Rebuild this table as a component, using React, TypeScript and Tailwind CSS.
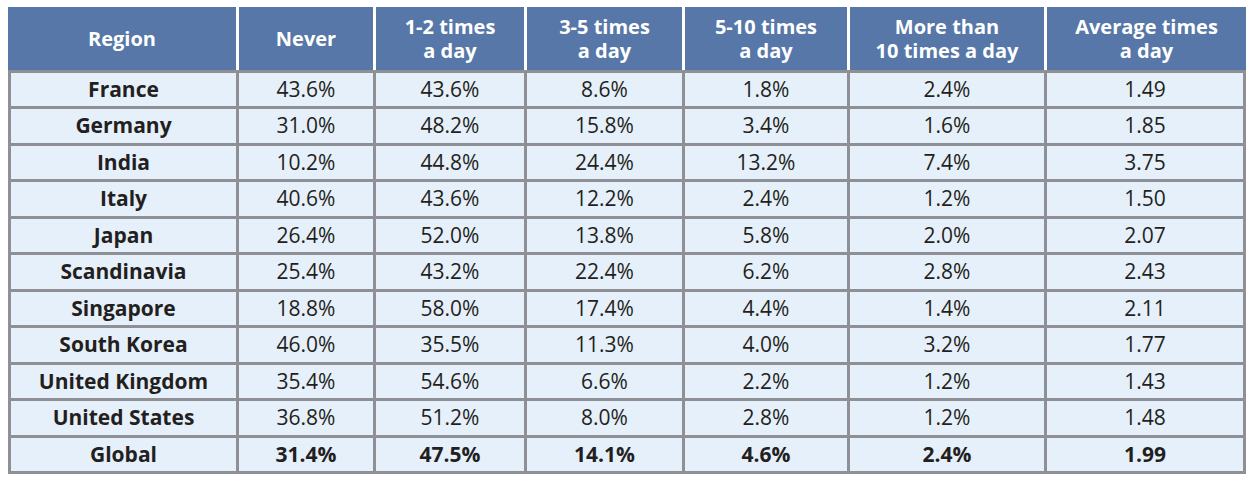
const cols = 'grid-cols-[225px_134px_148px_155px_162px_194px_196px]';

const headers = [
  ['Region'],
  ['Never'],
  ['1-2 times', 'a day'],
  ['3-5 times', 'a day'],
  ['5-10 times', 'a day'],
  ['More than', '10 times a day'],
  ['Average times', 'a day'],
];

const rows = [
  ['France', '43.6%', '43.6%', '8.6%', '1.8%', '2.4%', '1.49'],
  ['Germany', '31.0%', '48.2%', '15.8%', '3.4%', '1.6%', '1.85'],
  ['India', '10.2%', '44.8%', '24.4%', '13.2%', '7.4%', '3.75'],
  ['Italy', '40.6%', '43.6%', '12.2%', '2.4%', '1.2%', '1.50'],
  ['Japan', '26.4%', '52.0%', '13.8%', '5.8%', '2.0%', '2.07'],
  ['Scandinavia', '25.4%', '43.2%', '22.4%', '6.2%', '2.8%', '2.43'],
  ['Singapore', '18.8%', '58.0%', '17.4%', '4.4%', '1.4%', '2.11'],
  ['South Korea', '46.0%', '35.5%', '11.3%', '4.0%', '3.2%', '1.77'],
  ['United Kingdom', '35.4%', '54.6%', '6.6%', '2.2%', '1.2%', '1.43'],
  ['United States', '36.8%', '51.2%', '8.0%', '2.8%', '1.2%', '1.48'],
  ['Global', '31.4%', '47.5%', '14.1%', '4.6%', '2.4%', '1.99'],
];

export default function App() {
  return (
    <div className="w-[1252px] h-[478px] bg-white pt-[7px] pl-[8px] font-['Open_Sans',sans-serif]">
      <div className="w-[1238px]">
        <div className="grid grid-cols-[228px_134px_148px_155px_162px_194px_199px] gap-x-[3px] bg-white h-[63px]">
          {headers.map((h) => (
            <div
              key={h.join(' ')}
              className="bg-[#5677a7] flex flex-col items-center justify-center text-white font-bold text-[20px] leading-[24px] text-center"
            >
              {h.map((line) => (
                <span key={line} className="block h-[24px]">
                  {line}
                </span>
              ))}
            </div>
          ))}
        </div>
        <div className={`grid ${cols} grid-rows-[repeat(11,1fr)] gap-[3px] p-[3px] bg-[#8e9095] h-[404px]`}>
          {rows.map((r, ri) =>
            r.map((cell, ci) => (
              <div
                key={`${ri}-${ci}`}
                className={`bg-[#e6f0fa] flex items-center justify-center text-[21px] text-[#231f20] ${
                  ci === 0 || ri === rows.length - 1 ? 'font-bold' : 'font-normal'
                }`}
              >
                {cell}
              </div>
            ))
          )}
        </div>
      </div>
    </div>
  );
}
